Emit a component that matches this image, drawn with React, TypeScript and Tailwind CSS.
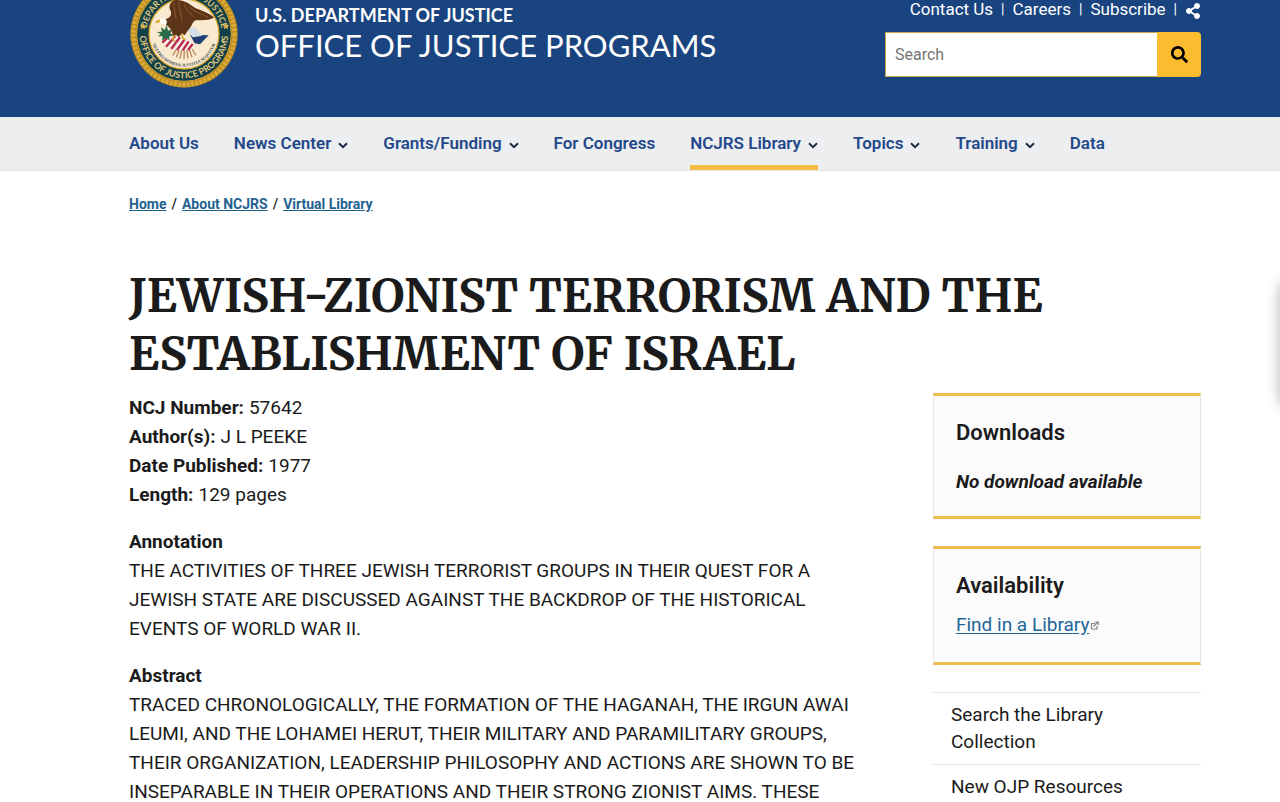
import { FaSearch, FaShareAlt } from "react-icons/fa";

type NavItem = {
  label: string;
  menu?: boolean;
  active?: boolean;
};

const navItems: NavItem[] = [
  { label: "About Us" },
  { label: "News Center", menu: true },
  { label: "Grants/Funding", menu: true },
  { label: "For Congress" },
  { label: "NCJRS Library", menu: true, active: true },
  { label: "Topics", menu: true },
  { label: "Training", menu: true },
  { label: "Data" },
];

const utilityLinks = ["Contact Us", "Careers", "Subscribe"];

const details = [
  { label: "NCJ Number:", value: "57642" },
  { label: "Author(s):", value: "J L PEEKE" },
  { label: "Date Published:", value: "1977" },
  { label: "Length:", value: "129 pages" },
];

function Seal() {
  return (
    <svg viewBox="0 0 324 324" className="size-[108px]" role="img" aria-label="Office of Justice Programs seal">
      <defs>
        <path id="ring-top" d="M49 162 A113 113 0 0 1 275 162" />
        <path id="ring-bottom" d="M29 162 A133 133 0 0 0 295 162" />
        <path id="motto" d="M68 130 A99 99 0 1 0 256 130" />
      </defs>
      <circle cx="162" cy="162" r="161" fill="#b98a22" />
      <circle cx="162" cy="162" r="152" fill="none" stroke="#dba936" strokeWidth="13" strokeDasharray="9 4" />
      <circle cx="162" cy="162" r="142" fill="#12404a" stroke="#d9a52e" strokeWidth="3" />
      <circle cx="162" cy="162" r="105" fill="#f8e9cf" stroke="#d9a52e" strokeWidth="4" />
      <g fill="#dfc47c" fontFamily="Lato, sans-serif" fontWeight="700">
        <text fontSize="26" textAnchor="middle">
          <textPath href="#ring-top" startOffset="50%">DEPARTMENT OF JUSTICE</textPath>
        </text>
        <text fontSize="27" textAnchor="middle">
          <textPath href="#ring-bottom" startOffset="50%">OFFICE OF JUSTICE PROGRAMS</textPath>
        </text>
      </g>
      <path d="M39 129l3 6 7 1-5 5 1 7-6-4-6 4 1-7-5-5 7-1zM288 129l3 6 7 1-5 5 1 7-6-4-6 4 1-7-5-5 7-1z" fill="#d9b04a" />
      <text fontSize="13" fill="#3d4a50" fontFamily="Liberation Serif, serif" fontWeight="700" textAnchor="middle">
        <textPath href="#motto" startOffset="50%">QUI PRO DOMINA JUSTITIA SEQUITUR</textPath>
      </text>
      {/* rays under the shield */}
      <path
        d="M142 204L128 226M149 206L139 232M156 207L150 236M163 207L162 238M170 207L174 236M177 206L186 232M184 204L198 226"
        stroke="#b98a5c"
        strokeWidth="4"
      />
      {/* shield */}
      <path d="M94 174L160 162L196 198L186 208Q160 214 128 206Q102 196 94 174Z" fill="#f7efe8" />
      <path
        d="M97 188L116 170M108 200L136 168M124 206L150 172M141 210L164 178M158 211L176 184M174 210L188 192"
        stroke="#b8294a"
        strokeWidth="7"
      />
      <path d="M180 164L236 166L210 193L194 190Z" fill="#223f74" />
      <path d="M168 146L196 142L216 168L188 172Z" fill="#d5dde6" />
      {/* olive branch */}
      <path
        d="M80 156l16-1-3-14 11 9 6-15 4 17 13-5-6 13 10 6-14 4 2 11-12-6-11 7 2-13-14 0 8-7z"
        fill="#2c6b49"
      />
      {/* eagle */}
      <path d="M104 116Q90 112 86 124Q92 134 108 134L120 126Z" fill="#fdfbf4" />
      <path d="M88 118L76 125L78 130L90 127Z" fill="#e0a52c" />
      <path
        d="M106 117C120 114 126 106 122 92C114 80 120 66 134 60C156 60 172 66 184 76C198 90 228 92 252 112C244 120 222 122 200 120C188 122 188 134 178 146C172 152 170 158 164 166L156 160L146 172L138 164L130 170C126 156 124 144 108 134C112 128 112 122 106 117Z"
        fill="#5c3519"
      />
      <path
        d="M132 68C130 84 136 98 138 116M146 66C148 84 152 98 156 122M162 72C168 86 178 98 192 112M178 80C192 96 212 100 234 112"
        stroke="#8d5a2e"
        strokeWidth="3"
        fill="none"
      />
      <path d="M134 166l-6 12 6 6M156 162l2 12 8 6" stroke="#d9a52e" strokeWidth="5" fill="none" />
    </svg>
  );
}

function Chevron() {
  return (
    <svg viewBox="0 0 10 7" className="mt-[3px] h-[7px] w-[10px]" aria-hidden="true">
      <path d="M1 1.3L5 5.2L9 1.3" fill="none" stroke="#1b2b45" strokeWidth="2" />
    </svg>
  );
}

function ExternalIcon() {
  return (
    <svg viewBox="0 0 9 9" className="mb-px ml-px inline size-[9px]" aria-hidden="true">
      <path d="M5 2.5H1.5V8H7V5M3.5 5.5L7.5 1.5M5 1H8.3V4" fill="none" stroke="#858585" strokeWidth="1.2" />
    </svg>
  );
}

function Header() {
  return (
    <header className="flex h-[117px] items-start justify-between overflow-hidden bg-[#1a447f] pl-[130px] pr-[79px] text-white">
      <a href="#" className="flex items-start gap-[17px]">
        <span className="-mt-5">
          <Seal />
        </span>
        <span className="flex flex-col pt-[3px] font-[Lato,sans-serif]">
          <span className="text-[18px] font-bold leading-6">U.S. DEPARTMENT OF JUSTICE</span>
          <span className="text-[31px] leading-9">OFFICE OF JUSTICE PROGRAMS</span>
        </span>
      </a>

      <div className="w-[316px]">
        <div className="flex h-[18px] items-center justify-end gap-2 text-[17px] leading-5">
          {utilityLinks.map((label) => (
            <span key={label} className="flex items-center gap-2">
              <a href="#">{label}</a>
              <span className="text-sm">|</span>
            </span>
          ))}
          <button type="button" aria-label="Share" className="pt-1">
            <FaShareAlt className="size-4" />
          </button>
        </div>
        <form className="mt-[14px] flex h-[45px]">
          <input
            type="search"
            aria-label="Search"
            placeholder="Search"
            className="min-w-0 flex-1 border border-r-0 border-[#c9a64d] bg-white px-[9px] text-base text-black placeholder:text-[#757575]"
          />
          <button
            type="submit"
            aria-label="Submit search"
            className="flex w-11 items-center justify-center rounded-r bg-[#fbbc30] text-black"
          >
            <FaSearch className="size-[17px]" />
          </button>
        </form>
      </div>
    </header>
  );
}

export default function App() {
  return (
    <div className="relative h-screen overflow-hidden bg-white font-[Roboto,sans-serif] text-[#1b1b1b]">
      <Header />

      <nav className="flex h-[54px] gap-[35px] border-b border-[#e6e6e6] bg-[#edeef0] pl-[129px] pr-[79px]">
        {navItems.map((item) => (
          <a
            key={item.label}
            href="#"
            className={`flex items-center gap-[7px] whitespace-nowrap border-b-5 pt-[5px] text-[17px] font-semibold text-[#23498a] ${
              item.active ? "border-[#f3bd42]" : "border-transparent"
            }`}
          >
            {item.label}
            {item.menu && <Chevron />}
          </a>
        ))}
      </nav>

      <div className="pl-[129px] pr-[79px]">
        <nav aria-label="Breadcrumb" className="flex gap-[5px] pt-[23px] text-sm font-bold leading-5">
          <a href="#" className="text-[#1f628f] underline">Home</a>
          <span className="font-medium">/</span>
          <a href="#" className="text-[#1f628f] underline">About NCJRS</a>
          <span className="font-medium">/</span>
          <a href="#" className="text-[#1f628f] underline">Virtual Library</a>
        </nav>

        <h1 className="mt-[53px] font-[Merriweather,'Liberation_Serif',serif] text-[46px] font-bold leading-[58px]">
          JEWISH-ZIONIST TERRORISM AND THE ESTABLISHMENT OF ISRAEL
        </h1>

        <div className="mt-[10px] flex gap-[68px]">
          <main className="min-w-0 flex-1 text-[19px] leading-[29px]">
            <dl>
              {details.map((d) => (
                <div key={d.label} className="flex gap-[5px]">
                  <dt className="font-bold">{d.label}</dt>
                  <dd>{d.value}</dd>
                </div>
              ))}
            </dl>

            <h2 className="mt-[18px] font-bold">Annotation</h2>
            <p>
              THE ACTIVITIES OF THREE JEWISH TERRORIST GROUPS IN THEIR QUEST FOR A JEWISH STATE ARE
              DISCUSSED AGAINST THE BACKDROP OF THE HISTORICAL EVENTS OF WORLD WAR II.
            </p>

            <h2 className="mt-[18px] font-bold">Abstract</h2>
            <p>
              TRACED CHRONOLOGICALLY, THE FORMATION OF THE HAGANAH, THE IRGUN AWAI LEUMI, AND THE
              LOHAMEI HERUT, THEIR MILITARY AND PARAMILITARY GROUPS, THEIR ORGANIZATION, LEADERSHIP
              PHILOSOPHY AND ACTIONS ARE SHOWN TO BE INSEPARABLE IN THEIR OPERATIONS AND THEIR STRONG
              ZIONIST AIMS. THESE
            </p>
          </main>

          <aside className="w-[268px] shrink-0 text-[19px] leading-[27px]">
            <section className="h-[126px] border-x border-y-3 border-x-[#e6e6e6] border-y-[#edbd50] bg-[#fbfbfb] px-[22px] pt-[23px]">
              <h2 className="text-[22px] font-semibold">Downloads</h2>
              <p className="mt-[22px] font-bold italic">No download available</p>
            </section>

            <section className="mt-[27px] h-[119px] border-x border-y-3 border-x-[#e6e6e6] border-y-[#edbd50] bg-[#fbfbfb] px-[22px] pt-[23px]">
              <h2 className="text-[22px] font-semibold">Availability</h2>
              <p className="mt-3">
                <a href="#" className="text-[#23669a] underline underline-offset-2">Find in a Library</a>
                <ExternalIcon />
              </p>
            </section>

            <ul className="mt-[27px]">
              <li className="border-t border-[#dfe1e2] px-[18px] pb-[9px] pt-2">
                <a href="#" className="block w-44">Search the Library Collection</a>
              </li>
              <li className="border-t border-[#dfe1e2] px-[18px] pb-[9px] pt-2">
                <a href="#">New OJP Resources</a>
              </li>
            </ul>
          </aside>
        </div>
      </div>

      {/* drawer tucked behind the right edge, only its shadow shows */}
      <div className="absolute left-full top-[284px] h-[120px] w-10 bg-white shadow-[0_0_14px_rgba(0,0,0,0.3)]" />
    </div>
  );
}
